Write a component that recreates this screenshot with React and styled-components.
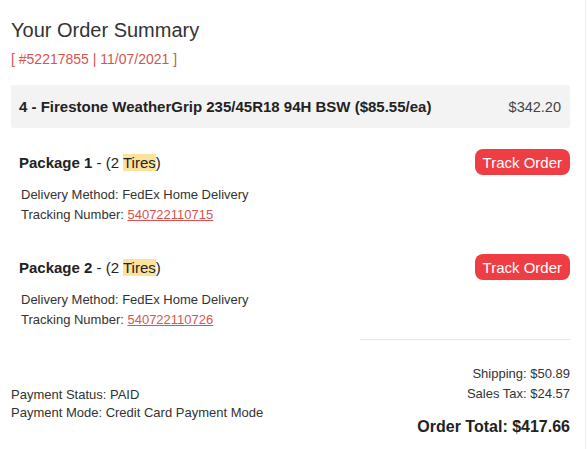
import React from 'react';
import styled, { createGlobalStyle } from 'styled-components';

const Global = createGlobalStyle`
  body {
    margin: 0;
    background: #fff;
    font-family: "Liberation Sans", Arial, sans-serif;
    color: #333;
  }
`

const Page = styled.div`
  width: 586px;
  min-height: 449px;
  box-sizing: border-box;
  border-right: 1px solid #eeeeee;
  padding: 18px 15px 0 11px;
`

const Title = styled.h2`
  margin: 0;
  font-size: 20px;
  font-weight: 400;
  line-height: 24px;
  color: #333;
`

const OrderRef = styled.div`
  margin-top: 9px;
  font-size: 14px;
  line-height: 16px;
  color: #d9534f;
`

const ItemBar = styled.div`
  margin-top: 18px;
  height: 43px;
  display: flex;
  align-items: center;
  justify-content: space-between;
  padding: 0 9px 0 8px;
  background: #f3f3f3;
  border-radius: 3px;
  font-size: 15px;
`

const ItemName = styled.span`
  font-weight: 700;
  color: #222;
`

const ItemPrice = styled.span`
  font-size: 14.5px;
  color: #444;
`

const Package = styled.div`
  padding-left: 8px;
  margin-top: ${p => p.first ? '21px' : '29px'};
`

const PackageHead = styled.div`
  display: flex;
  align-items: center;
  justify-content: space-between;
  height: 26px;
`

const PackageTitle = styled.div`
  font-size: 15px;
  color: #222;
  b { font-weight: 700; }
`

const Mark = styled.span`
  background: #fce29a;
`

const TrackButton = styled.button`
  border: 0;
  background: #ef3d44;
  color: #fff;
  font-family: inherit;
  font-size: 15px;
  height: 26px;
  padding: 0 8px;
  border-radius: 8px;
  cursor: pointer;
`

const Details = styled.div`
  margin-top: 10px;
  padding-left: 2px;
  font-size: 13px;
  line-height: 20px;
  color: #333;
`

const TrackLink = styled.a`
  color: #d9534f;
  text-decoration: underline;
`

const Divider = styled.hr`
  margin: 9px 0 0 auto;
  width: 210px;
  border: 0;
  border-top: 1px solid #e6e6e6;
`

const Footer = styled.div`
  margin-top: 24px;
  display: flex;
  justify-content: space-between;
  align-items: flex-start;
`

const Payment = styled.div`
  margin-top: 22px;
  font-size: 13px;
  line-height: 18px;
`

const Totals = styled.div`
  text-align: right;
  font-size: 13px;
  line-height: 20px;
`

const GrandTotal = styled.div`
  margin-top: 13px;
  font-size: 16px;
  font-weight: 700;
  color: #222;
`

const packages = [
  { n: 1, tracking: '540722110715' },
  { n: 2, tracking: '540722110726' },
]

const App = () => (
  <Page>
    <Global />
    <Title>Your Order Summary</Title>
    <OrderRef>[ #52217855 | 11/07/2021 ]</OrderRef>
    <ItemBar>
      <ItemName>4 - Firestone WeatherGrip 235/45R18 94H BSW ($85.55/ea)</ItemName>
      <ItemPrice>$342.20</ItemPrice>
    </ItemBar>
    {packages.map((p, i) => (
      <Package key={p.n} first={i === 0}>
        <PackageHead>
          <PackageTitle><b>Package {p.n}</b> - (2 <Mark>Tires</Mark>)</PackageTitle>
          <TrackButton>Track Order</TrackButton>
        </PackageHead>
        <Details>
          Delivery Method: FedEx Home Delivery<br />
          Tracking Number: <TrackLink href="#">{p.tracking}</TrackLink>
        </Details>
      </Package>
    ))}
    <Divider />
    <Footer>
      <Payment>
        Payment Status: PAID<br />
        Payment Mode: Credit Card Payment Mode
      </Payment>
      <Totals>
        Shipping: $50.89<br />
        Sales Tax: $24.57
        <GrandTotal>Order Total: $417.66</GrandTotal>
      </Totals>
    </Footer>
  </Page>
);

export default App;
